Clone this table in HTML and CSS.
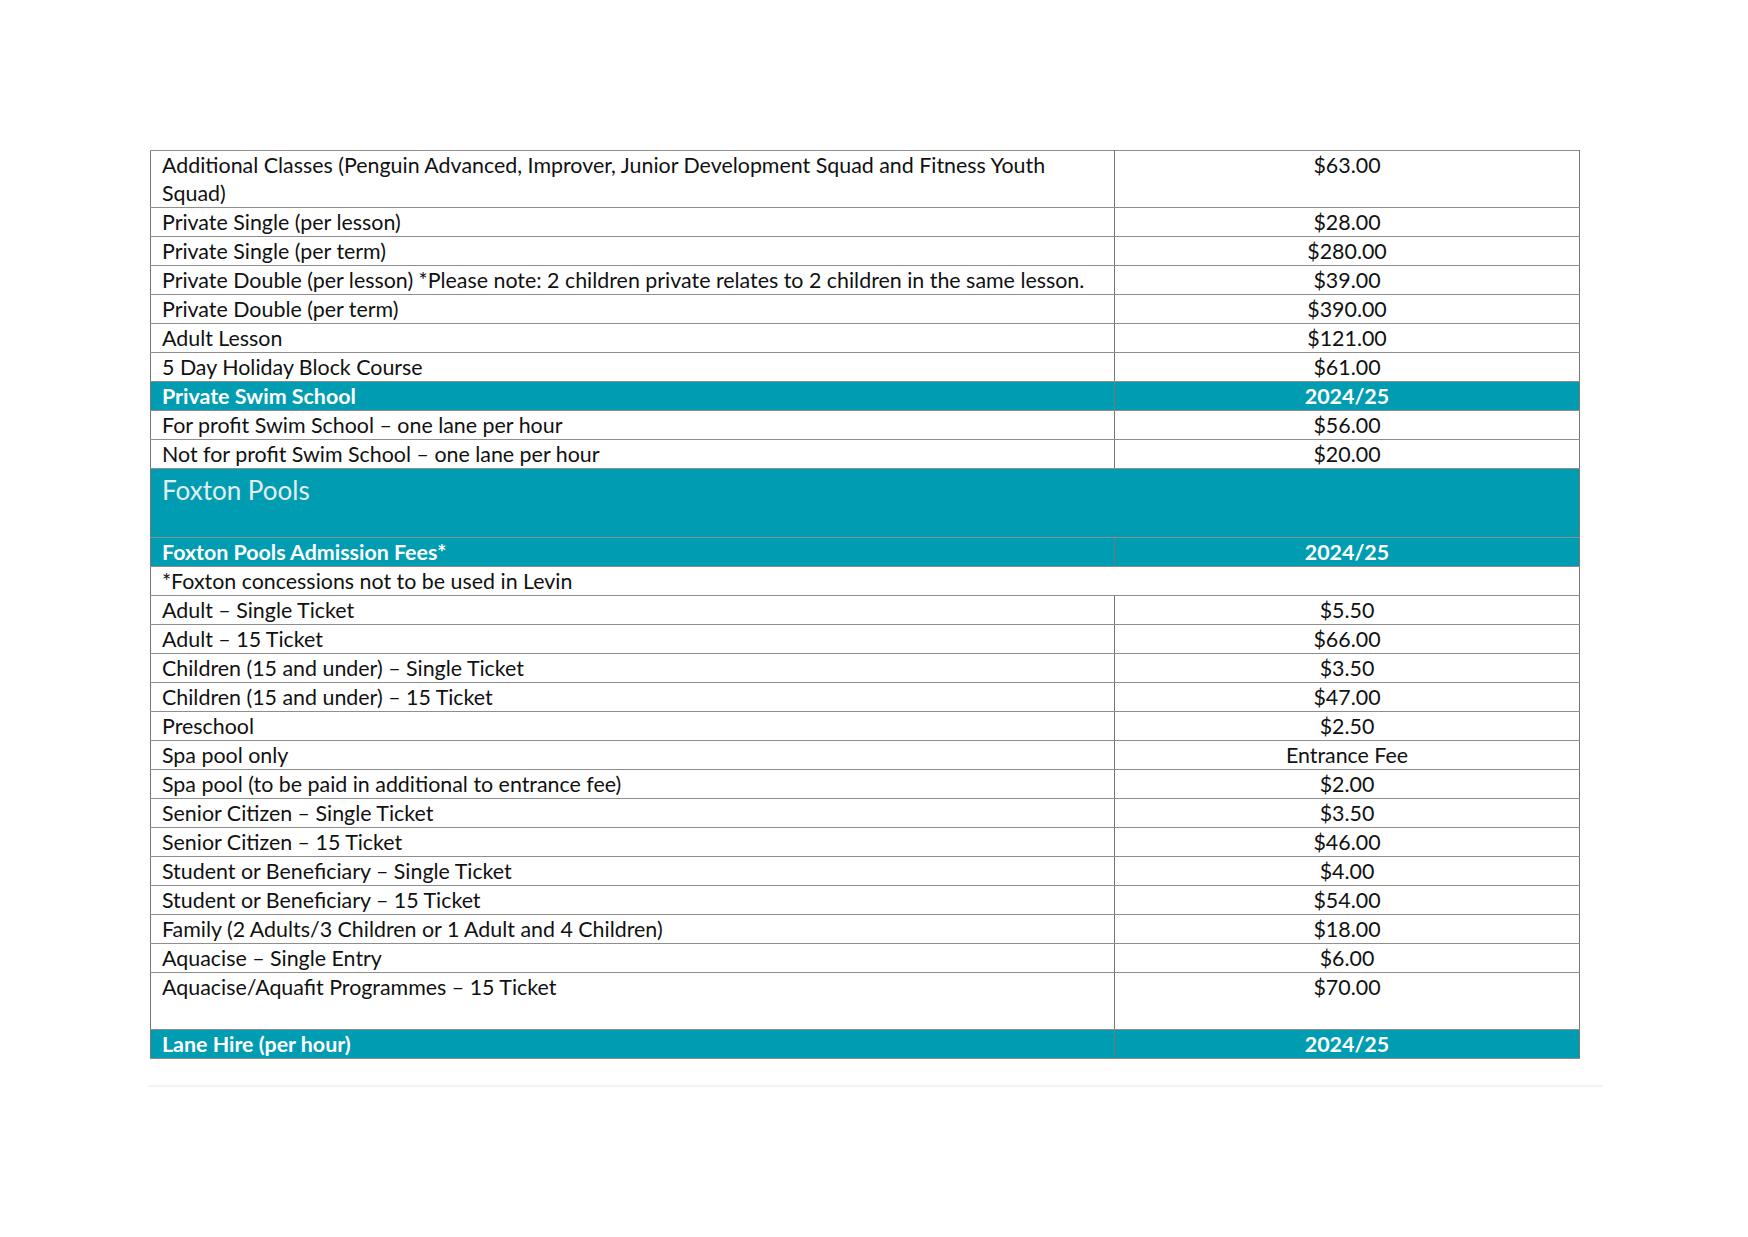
FILE: index.html
```html
<!DOCTYPE html>
<html lang="en">
<head>
<meta charset="utf-8">
<title>Fees and Charges – Pools</title>
<link rel="stylesheet" href="styles.css">
</head>
<body>
<main class="page">
  <table class="fees">
    <colgroup>
      <col class="col-item">
      <col class="col-price">
    </colgroup>
    <tbody>
      <tr class="tall"><td>Additional Classes (Penguin Advanced, Improver, Junior Development Squad and Fitness Youth Squad)</td><td class="price">$63.00</td></tr>
      <tr><td>Private Single (per lesson)</td><td class="price">$28.00</td></tr>
      <tr><td>Private Single (per term)</td><td class="price">$280.00</td></tr>
      <tr><td>Private Double (per lesson) *Please note: 2 children private relates to 2 children in the same lesson.</td><td class="price">$39.00</td></tr>
      <tr><td>Private Double (per term)</td><td class="price">$390.00</td></tr>
      <tr><td>Adult Lesson</td><td class="price">$121.00</td></tr>
      <tr><td>5 Day Holiday Block Course</td><td class="price">$61.00</td></tr>
      <tr class="head"><td>Private Swim School</td><td class="price">2024/25</td></tr>
      <tr><td>For profit Swim School – one lane per hour</td><td class="price">$56.00</td></tr>
      <tr><td>Not for profit Swim School – one lane per hour</td><td class="price">$20.00</td></tr>
      <tr class="section"><td colspan="2">Foxton Pools</td></tr>
      <tr class="head"><td>Foxton Pools Admission Fees*</td><td class="price">2024/25</td></tr>
      <tr><td colspan="2">*Foxton concessions not to be used in Levin</td></tr>
      <tr><td>Adult – Single Ticket</td><td class="price">$5.50</td></tr>
      <tr><td>Adult – 15 Ticket</td><td class="price">$66.00</td></tr>
      <tr><td>Children (15 and under) – Single Ticket</td><td class="price">$3.50</td></tr>
      <tr><td>Children (15 and under) – 15 Ticket</td><td class="price">$47.00</td></tr>
      <tr><td>Preschool</td><td class="price">$2.50</td></tr>
      <tr><td>Spa pool only</td><td class="price">Entrance Fee</td></tr>
      <tr><td>Spa pool (to be paid in additional to entrance fee)</td><td class="price">$2.00</td></tr>
      <tr><td>Senior Citizen – Single Ticket</td><td class="price">$3.50</td></tr>
      <tr><td>Senior Citizen – 15 Ticket</td><td class="price">$46.00</td></tr>
      <tr><td>Student or Beneficiary – Single Ticket</td><td class="price">$4.00</td></tr>
      <tr><td>Student or Beneficiary – 15 Ticket</td><td class="price">$54.00</td></tr>
      <tr><td>Family (2 Adults/3 Children or 1 Adult and 4 Children)</td><td class="price">$18.00</td></tr>
      <tr><td>Aquacise – Single Entry</td><td class="price">$6.00</td></tr>
      <tr class="tall"><td class="pad-bottom">Aquacise/Aquafit Programmes – 15 Ticket</td><td class="price">$70.00</td></tr>
      <tr class="head"><td>Lane Hire (per hour)</td><td class="price">2024/25</td></tr>
    </tbody>
  </table>
  <div class="page-edge"></div>
</main>
</body>
</html>
```
FILE: styles.css
```css
html, body {
  margin: 0;
  padding: 0;
  background: #ffffff;
}

.page {
  padding: 150px 0 0 150px;
  font-family: Lato, "Liberation Sans", sans-serif;
  color: #111111;
}

.fees {
  width: 1429px;
  border-collapse: collapse;
  table-layout: fixed;
  font-size: 21.4px;
  line-height: 28px;
}

.col-item { width: 964px; }
.col-price { width: 465px; }

.fees td {
  border-top: 1px solid #8e8e8e;
  border-bottom: 1px solid #8e8e8e;
  border-left: 1px solid #777777;
  border-right: 1px solid #777777;
  padding: 0 11px;
  vertical-align: top;
  text-align: left;
}

.fees td.price {
  text-align: center;
  border-left: 1px solid #5e5e5e;
}

.fees td.pad-bottom {
  padding-bottom: 28px;
}

.head td {
  background: #009db2;
  color: #ffffff;
  font-weight: 700;
}

.section td {
  background: #009db2;
  color: #e4eef0;
  font-weight: 400;
  font-size: 26px;
  line-height: 34px;
  padding-top: 4px;
  padding-bottom: 30px;
}

.page-edge {
  width: 1455px;
  margin: 26px 0 0 -2px;
  border-top: 2px solid #f4f4f4;
}
```
